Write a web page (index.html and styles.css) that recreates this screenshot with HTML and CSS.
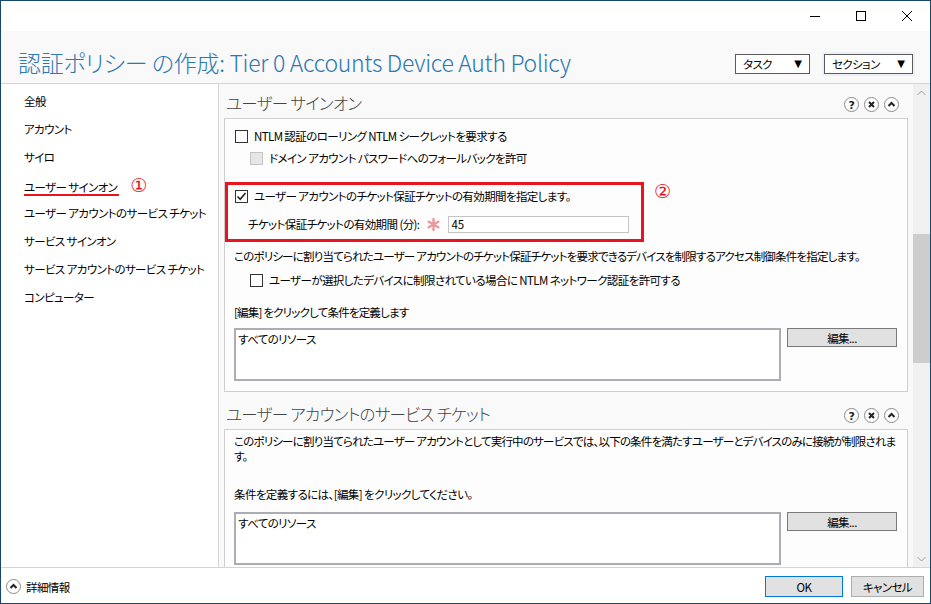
FILE: index.html
```html
<!DOCTYPE html>
<html lang="ja">
<head>
<meta charset="utf-8">
<title>認証ポリシー の作成</title>
<link rel="stylesheet" href="styles.css">
</head>
<body>
<div class="window">
  <div class="titlebar">
    <div class="winbtn"><svg width="10" height="10" viewBox="0 0 10 10"><line x1="0" y1="5.5" x2="10" y2="5.5" stroke="#000" stroke-width="1"/></svg></div>
    <div class="winbtn"><svg width="10" height="10" viewBox="0 0 10 10"><rect x="0.5" y="0.5" width="9" height="9" fill="none" stroke="#000" stroke-width="1"/></svg></div>
    <div class="winbtn"><svg width="10" height="10" viewBox="0 0 10 10"><path d="M0 0 L10 10 M10 0 L0 10" stroke="#000" stroke-width="1"/></svg></div>
  </div>
  <div class="header">
    <div class="title">認証ポリシー の作成: Tier 0 Accounts Device Auth Policy</div>
    <div class="dd dd-task"><span>タスク</span><span class="tri">▼</span></div>
    <div class="dd dd-sec"><span>セクション</span><span class="tri">▼</span></div>
  </div>
  <div class="body">
    <nav class="nav">
      <div class="nav-item">全般</div>
      <div class="nav-item">アカウント</div>
      <div class="nav-item">サイロ</div>
      <div class="nav-item"><span class="nav-mark">ユーザー サインオン</span><span class="num num1">①</span></div>
      <div class="nav-item">ユーザー アカウントのサービス チケット</div>
      <div class="nav-item">サービス サインオン</div>
      <div class="nav-item">サービス アカウントのサービス チケット</div>
      <div class="nav-item">コンピューター</div>
    </nav>
    <main class="main">
      <section class="section">
        <div class="sec-head">
          <div class="sec-title">ユーザー サインオン</div>
          <div class="sec-icons">
            <svg width="15" height="15" viewBox="0 0 15 15"><circle cx="7.5" cy="7.5" r="7" fill="#fff" stroke="#8a8a8a"/><text x="7.5" y="11.5" text-anchor="middle" font-size="11" font-family="DejaVu Sans" font-weight="bold" fill="#222">?</text></svg>
            <svg width="15" height="15" viewBox="0 0 15 15"><circle cx="7.5" cy="7.5" r="7" fill="#fff" stroke="#8a8a8a"/><path d="M5 5 L10 10 M10 5 L5 10" stroke="#222" stroke-width="2"/></svg>
            <svg width="15" height="15" viewBox="0 0 15 15"><circle cx="7.5" cy="7.5" r="7" fill="#fff" stroke="#8a8a8a"/><path d="M4.5 9 L7.5 6 L10.5 9" fill="none" stroke="#222" stroke-width="2"/></svg>
          </div>
        </div>
        <div class="box box1">
          <div class="row r-first"><span class="cb"></span><span>NTLM 認証のローリング NTLM シークレットを要求する</span></div>
          <div class="row indent"><span class="cb cb-dis"></span><span>ドメイン アカウント パスワードへのフォールバックを許可</span></div>
          <div class="row r-check"><span class="cb"><svg width="11" height="11" viewBox="0 0 11 11"><path d="M1.5 5.5 L4.2 8.3 L9.5 2" fill="none" stroke="#222" stroke-width="1.6"/></svg></span><span>ユーザー アカウントのチケット保証チケットの有効期間を指定します。</span></div>
          <div class="row r-field"><span class="lbl">チケット保証チケットの有効期間 (分):</span><svg class="ast" width="13" height="13" viewBox="0 0 13 13"><g stroke="#e8979b" stroke-width="2.4" stroke-linecap="round"><line x1="6.5" y1="1" x2="6.5" y2="12"/><line x1="1.7" y1="3.7" x2="11.3" y2="9.3"/><line x1="1.7" y1="9.3" x2="11.3" y2="3.7"/></g></svg><span class="input">45</span></div>
          <div class="row r-para">このポリシーに割り当てられたユーザー アカウントのチケット保証チケットを要求できるデバイスを制限するアクセス制御条件を指定します。</div>
          <div class="row indent"><span class="cb"></span><span>ユーザーが選択したデバイスに制限されている場合に NTLM ネットワーク認証を許可する</span></div>
          <div class="row r-para">[編集] をクリックして条件を定義します</div>
          <div class="cond"><div class="ta">すべてのリソース</div><div class="btn">編集...</div></div>
          <div class="redbox"></div>
          <span class="num num2">②</span>
        </div>
      </section>
      <section class="section">
        <div class="sec-head">
          <div class="sec-title">ユーザー アカウントのサービス チケット</div>
          <div class="sec-icons">
            <svg width="15" height="15" viewBox="0 0 15 15"><circle cx="7.5" cy="7.5" r="7" fill="#fff" stroke="#8a8a8a"/><text x="7.5" y="11.5" text-anchor="middle" font-size="11" font-family="DejaVu Sans" font-weight="bold" fill="#222">?</text></svg>
            <svg width="15" height="15" viewBox="0 0 15 15"><circle cx="7.5" cy="7.5" r="7" fill="#fff" stroke="#8a8a8a"/><path d="M5 5 L10 10 M10 5 L5 10" stroke="#222" stroke-width="2"/></svg>
            <svg width="15" height="15" viewBox="0 0 15 15"><circle cx="7.5" cy="7.5" r="7" fill="#fff" stroke="#8a8a8a"/><path d="M4.5 9 L7.5 6 L10.5 9" fill="none" stroke="#222" stroke-width="2"/></svg>
          </div>
        </div>
        <div class="box box2">
          <div class="para2">このポリシーに割り当てられたユーザー アカウントとして実行中のサービスでは、以下の条件を満たすユーザーとデバイスのみに接続が制限されま<br>す。</div>
          <div class="para3">条件を定義するには、[編集] をクリックしてください。</div>
          <div class="cond cond2"><div class="ta">すべてのリソース</div><div class="btn">編集...</div></div>
        </div>
      </section>
    </main>
    <div class="scrollbar">
      <div class="sb-arrow"><svg width="9" height="6" viewBox="0 0 9 6"><path d="M0.5 5 L4.5 1 L8.5 5" fill="none" stroke="#a0a0a0"/></svg></div>
      <div class="sb-track"><div class="sb-thumb"></div></div>
      <div class="sb-arrow"><svg width="9" height="6" viewBox="0 0 9 6"><path d="M0.5 1 L4.5 5 L8.5 1" fill="none" stroke="#a0a0a0"/></svg></div>
    </div>
  </div>
  <div class="footer">
    <div class="more">
      <svg width="15" height="15" viewBox="0 0 15 15"><circle cx="7.5" cy="7.5" r="7" fill="#fff" stroke="#8a8a8a"/><path d="M4.5 9 L7.5 6 L10.5 9" fill="none" stroke="#222" stroke-width="2"/></svg>
      <span>詳細情報</span>
    </div>
    <div class="fbtns">
      <div class="fbtn ok">OK</div>
      <div class="fbtn cancel">キャンセル</div>
    </div>
  </div>
</div>
</body>
</html>
```
FILE: styles.css
```css
* { box-sizing: border-box; }
html, body { margin: 0; padding: 0; }
body {
  width: 931px;
  height: 604px;
  overflow: hidden;
  font-family: "Noto Sans CJK JP", "Noto Sans", sans-serif;
  font-size: 11.5px;
  letter-spacing: -0.6px;
  font-feature-settings: "palt";
  color: #000;
  background: #fff;
}
.window {
  width: 931px;
  height: 604px;
  border: 1px solid #17476b;
  display: flex;
  flex-direction: column;
  background: #fff;
}
.titlebar {
  height: 30px;
  flex: none;
  display: flex;
  justify-content: flex-end;
  align-items: center;
  background: #fff;
}
.winbtn {
  width: 46px;
  height: 30px;
  display: flex;
  align-items: center;
  justify-content: center;
}
.header {
  height: 53px;
  flex: none;
  display: flex;
  align-items: center;
  padding: 13px 17px 0 17px;
  background: #f9f9f9;
  border-bottom: 1px solid #d4d4d4;
}
.title {
  flex: 1;
  font-family: "Noto Sans CJK JP", sans-serif;
  font-weight: 300;
  font-size: 23px;
  color: #2b78b2;
  white-space: nowrap;
  letter-spacing: -0.3px;
  margin-top: -3px;
}
.dd {
  height: 20px;
  border: 1px solid #5a5a5a;
  background: #fff;
  display: flex;
  align-items: center;
  justify-content: space-between;
  padding: 0 7px 0 7px;
}
.dd-task { width: 75px; margin-right: 14px; margin-left: -2px; }
.dd-sec { width: 89px; box-shadow: 0 0 0 2px #eef0f8; }
.tri { font-size: 10px; font-family: "DejaVu Sans", sans-serif; letter-spacing: 0; }
.body {
  flex: 1;
  display: flex;
  min-height: 0;
  background: #f9f9f9;
}
.nav {
  width: 218px;
  flex: none;
  border-right: 1px solid #d4d4d4;
  padding: 3px 0 0 23px;
  background: #fff;
}
.nav-item {
  height: 28px;
  display: flex;
  align-items: center;
  white-space: nowrap;
}
.nav-mark {
  display: inline-block;
  line-height: 14px;
  border-bottom: 2px solid #e8141e;
  margin-top: 6px;
  padding-right: 2px;
}
.num {
  color: #e8141e;
  font-family: "DejaVu Sans", sans-serif;
  font-size: 19px;
  line-height: 20px;
  letter-spacing: 0;
}
.num1 { margin-left: 11px; }
.main {
  flex: 1;
  overflow: hidden;
  padding: 0 5px 0 5px;
  min-width: 0;
}
.section + .section { margin-top: 3px; }
.sec-head {
  height: 34px;
  padding-top: 4px;
  display: flex;
  align-items: center;
  justify-content: space-between;
}
.sec-title {
  font-size: 16.5px;
  letter-spacing: -0.7px;
  font-weight: 300;
  color: #444;
  padding-left: 2px;
}
.sec-icons {
  display: flex;
  gap: 5px;
  padding-right: 9px;
  padding-top: 2px;
}
.sec-icons svg { display: block; }
.box {
  position: relative;
  border: 1px solid #cfcfcf;
  background: #fdfdfd;
  padding: 6px 8px 10px 9px;
}
.row {
  height: 22px;
  display: flex;
  align-items: center;
  white-space: nowrap;
}
.r-first, .r-check { padding-left: 1px; }
.indent { padding-left: 16px; }
.r-check { margin-top: 16px; }
.r-field { padding-left: 14px; margin-top: 6px; }
.r-para { margin-top: 10px; padding-left: 0; letter-spacing: -0.8px; }
.r-para + .indent { margin-top: 2px; }
.cb {
  width: 13px;
  height: 13px;
  border: 1px solid #333;
  background: #fff;
  margin-right: 6px;
  flex: none;
  display: flex;
  align-items: center;
  justify-content: center;
}
.cb-dis { border-color: #c4c4c4; background: #e6e6e6; }
.ast { margin-left: 8px; margin-right: 8px; flex: none; }
.input {
  width: 181px;
  height: 17px;
  border: 1px solid #c4c4c4;
  background: #fff;
  padding-left: 2px;
  line-height: 15px;
  display: flex;
  align-items: center;
  letter-spacing: 0;
}
.cond {
  display: flex;
  align-items: flex-start;
  margin-top: 5px;
}
.ta {
  width: 547px;
  height: 53px;
  border: 2px solid #acadb3;
  background: #fff;
  padding: 1px 2px;
}
.btn {
  width: 110px;
  height: 19px;
  margin-left: 6px;
  border: 1px solid #7a7a7a;
  background: #e1e1e1;
  display: flex;
  align-items: center;
  justify-content: center;
}
.redbox {
  position: absolute;
  left: 0;
  top: 63px;
  width: 419px;
  height: 60px;
  border: 3px solid #e8141e;
  pointer-events: none;
}
.num2 {
  position: absolute;
  left: 429px;
  top: 62px;
}
.box2 { padding-top: 4px; }
.para2 { line-height: 15px; white-space: nowrap; letter-spacing: -0.8px; }
.para3 { margin-top: 23px; line-height: 15px; }
.cond2 { margin-top: 10px; }
.scrollbar {
  width: 17px;
  flex: none;
  background: #f0f0f0;
  display: flex;
  flex-direction: column;
}
.sb-arrow {
  height: 17px;
  display: flex;
  align-items: center;
  justify-content: center;
  flex: none;
}
.sb-track { flex: 1; padding-top: 133px; }
.sb-thumb { height: 129px; background: #cdcdcd; }
.footer {
  height: 36px;
  flex: none;
  border-top: 1px solid #d4d4d4;
  background: #fff;
  display: flex;
  align-items: center;
  justify-content: space-between;
  padding: 2px 6px 0 5px;
}
.more { display: flex; align-items: center; gap: 5px; }
.more svg { display: block; }
.fbtns { display: flex; gap: 8px; }
.fbtn {
  height: 21px;
  background: #e1e1e1;
  border: 1px solid #adadad;
  display: flex;
  align-items: center;
  justify-content: center;
}
.ok { width: 78px; border-color: #0078d7; }
.cancel { width: 73px; }
```
